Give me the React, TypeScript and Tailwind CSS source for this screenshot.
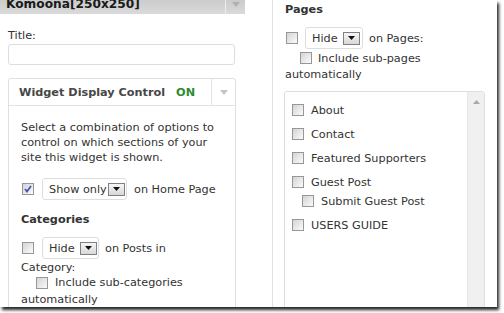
import React from "react";

const font = { fontFamily: '"DejaVu Sans", Verdana, sans-serif' };

function Check({ checked }: { checked?: boolean }) {
  return (
    <span className="relative inline-flex w-[12px] h-[12px] shrink-0 border border-[#979797] bg-gradient-to-br from-[#d4d4d4] to-[#fbfbfb] items-center justify-center">
      {checked && (
        <svg width="8" height="8" viewBox="0 0 8 8">
          <path d="M1 4 L3 6.5 L7 1" stroke="#4b4fb8" strokeWidth="1.8" fill="none" />
        </svg>
      )}
    </span>
  );
}

function Select({ label, w, pr }: { label: string; w: string; pr: string }) {
  return (
    <div className={`flex items-center justify-between h-[22px] ${w} ${pr} pl-[6px] border border-[#dedede] rounded-[3px] bg-white shrink-0`}>
      <span className="text-[#333] whitespace-nowrap">{label}</span>
      <span className="flex items-center justify-center w-[17px] h-[13px] shrink-0 border border-[#808080] bg-gradient-to-b from-[#f6f6f6] to-[#d8d8d8]">
        <svg width="7" height="4" viewBox="0 0 7 4">
          <path d="M0 0 H7 L3.5 4 Z" fill="#111" />
        </svg>
      </span>
    </div>
  );
}

function Tri({ color }: { color: string }) {
  return (
    <svg width="8" height="5" viewBox="0 0 8 5">
      <path d="M0 0 H8 L4 5 Z" fill={color} />
    </svg>
  );
}

export default function App() {
  return (
    <div className="w-[504px] h-[313px] bg-white overflow-hidden" style={font}>
      <div className="w-[497px] h-[307px] bg-white shadow-[2px_3px_3px_rgba(0,0,0,0.85)] flex overflow-hidden text-[11.25px] leading-[15px] text-[#333]">
        {/* Left column */}
        <div className="w-[272px] shrink-0">
          <div className="w-[245px] h-[14px] flex bg-gradient-to-b from-[#cbcbcb] to-[#dadada] overflow-hidden">
            <div className="flex-1 pl-[6px] overflow-hidden">
              <div className="mt-[-4px] text-[12.2px] leading-[16px] font-bold text-[#1a1a1a] whitespace-nowrap">Komoona[250x250]</div>
            </div>
            <div className="w-[20px] border-l border-[#ececec] flex items-start justify-center pt-[2px]">
              <Tri color="#b0b0b0" />
            </div>
          </div>
          <div className="pl-[8px]">
            <div className="mt-[14px]">Title:</div>
            <div className="mt-[1px] w-[227px] h-[21px] border border-[#dddddd] rounded-[3px] bg-white" />
            <div className="mt-[13px] w-[228px] h-[240px] border border-[#e0e0e0] rounded-t-[3px]">
              <div className="h-[27px] flex border-b border-[#e3e3e3]">
                <div className="flex-1 flex items-center pl-[10px] font-bold text-[#474747] whitespace-nowrap">
                  Widget Display Control
                  <span className="ml-[11px] text-[#2e8b2e]">ON</span>
                </div>
                <div className="w-[24px] border-l border-[#e3e3e3] flex items-center justify-center">
                  <Tri color="#c4c4c4" />
                </div>
              </div>
              <div className="pl-[12px] pr-[8px] pt-[14px]">
                <div>Select a combination of options to control on which sections of your site this widget is shown.</div>
                <div className="mt-[13px] flex items-center h-[22px]">
                  <span className="ml-[1px] flex"><Check checked /></span>
                  <span className="ml-[8px] flex"><Select label="Show only" w="w-[85px]" pr="pr-[1px]" /></span>
                  <span className="ml-[7px] whitespace-nowrap">on Home Page</span>
                </div>
                <div className="mt-[12px] font-bold text-[#333]">Categories</div>
                <div className="mt-[10px] flex items-center h-[22px]">
                  <span className="ml-[1px] flex"><Check /></span>
                  <span className="ml-[8px] flex"><Select label="Hide" w="w-[57px]" pr="pr-[1px]" /></span>
                  <span className="ml-[6px] whitespace-nowrap">on Posts in</span>
                </div>
                <div className="mt-[1px]">Category:</div>
                <div className="flex items-center h-[15px]">
                  <span className="ml-[15px] flex"><Check /></span>
                  <span className="ml-[7px] whitespace-nowrap">Include sub-categories</span>
                </div>
                <div className="mt-[2px]">automatically</div>
              </div>
            </div>
          </div>
        </div>
        {/* Right column */}
        <div className="flex-1 border-l border-[#e2e2e2] pl-[12px]">
          <div className="mt-[2px] font-bold text-[#333]">Pages</div>
          <div className="mt-[10px] flex items-center h-[22px]">
            <span className="ml-[1px] flex"><Check /></span>
            <span className="ml-[7px] flex"><Select label="Hide" w="w-[58px]" pr="pr-[2px]" /></span>
            <span className="ml-[6px] whitespace-nowrap">on Pages:</span>
          </div>
          <div className="mt-[1px] flex items-center h-[16px]">
            <span className="ml-[15px] flex"><Check /></span>
            <span className="ml-[6px] whitespace-nowrap">Include sub-pages</span>
          </div>
          <div className="mt-[1px]">automatically</div>
          <div className="mt-[9px] ml-[-1px] w-[201px] h-[240px] border border-[#dedede] rounded-t-[3px] flex">
            <div className="flex-1 pl-[7px] pt-[10px]">
              {["About", "Contact", "Featured Supporters", "Guest Post"].map((t) => (
                <div key={t} className="flex items-center h-[16px] mb-[8px]">
                  <Check />
                  <span className="ml-[7px] whitespace-nowrap">{t}</span>
                </div>
              ))}
              <div className="flex items-center h-[16px] mt-[-5px] mb-[8px] pl-[10px]">
                <Check />
                <span className="ml-[7px] whitespace-nowrap">Submit Guest Post</span>
              </div>
              <div className="flex items-center h-[16px]">
                <Check />
                <span className="ml-[7px] whitespace-nowrap">USERS GUIDE</span>
              </div>
            </div>
            <div className="w-[17px] bg-[#f0f0f0] border-l border-[#e6e6e6] flex justify-center pt-[8px]">
              <svg width="7" height="4" viewBox="0 0 7 4">
                <path d="M0 4 H7 L3.5 0 Z" fill="#a8a8a8" />
              </svg>
            </div>
          </div>
        </div>
      </div>
    </div>
  );
}
